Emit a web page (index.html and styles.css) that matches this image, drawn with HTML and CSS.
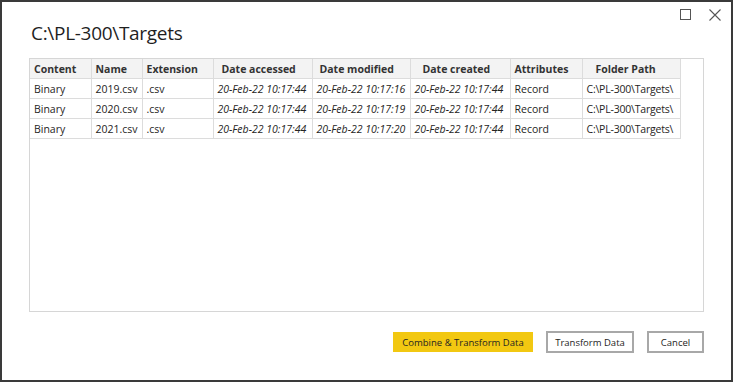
FILE: index.html
```html
<!DOCTYPE html>
<html lang="en">
<head>
    <meta charset="UTF-8">
    <title>C:\PL-300\Targets</title>
    <link rel="stylesheet" href="styles.css">
</head>
<body>
    <div class="dialog">
        <div class="window-controls">
            <span class="ctrl">
                <svg width="12" height="12" viewBox="0 0 12 12"><rect x="0.5" y="0.5" width="10" height="10" fill="none" stroke="#555" stroke-width="1"/></svg>
            </span>
            <span class="ctrl">
                <svg width="12" height="12" viewBox="0 0 12 12"><path d="M0.5 0.5 L11.5 11.5 M11.5 0.5 L0.5 11.5" stroke="#555" stroke-width="1.1" fill="none"/></svg>
            </span>
        </div>
        <h1 class="title">C:\PL-300\Targets</h1>
        <div class="preview">
            <table class="grid">
                <colgroup>
                    <col class="w-content">
                    <col class="w-name">
                    <col class="w-ext">
                    <col class="w-acc">
                    <col class="w-mod">
                    <col class="w-cre">
                    <col class="w-attr">
                    <col class="w-path">
                </colgroup>
                <thead>
                    <tr>
                        <th>Content</th>
                        <th>Name</th>
                        <th>Extension</th>
                        <th class="h-acc">Date accessed</th>
                        <th class="h-mod">Date modified</th>
                        <th class="h-cre">Date created</th>
                        <th>Attributes</th>
                        <th class="h-path">Folder Path</th>
                    </tr>
                </thead>
                <tbody>
                    <tr>
                        <td>Binary</td><td>2019.csv</td><td>.csv</td>
                        <td class="date">20-Feb-22 10:17:44</td>
                        <td class="date">20-Feb-22 10:17:16</td>
                        <td class="date">20-Feb-22 10:17:44</td>
                        <td>Record</td><td class="path">C:\PL-300\Targets\</td>
                    </tr>
                    <tr>
                        <td>Binary</td><td>2020.csv</td><td>.csv</td>
                        <td class="date">20-Feb-22 10:17:44</td>
                        <td class="date">20-Feb-22 10:17:19</td>
                        <td class="date">20-Feb-22 10:17:44</td>
                        <td>Record</td><td class="path">C:\PL-300\Targets\</td>
                    </tr>
                    <tr>
                        <td>Binary</td><td>2021.csv</td><td>.csv</td>
                        <td class="date">20-Feb-22 10:17:44</td>
                        <td class="date">20-Feb-22 10:17:20</td>
                        <td class="date">20-Feb-22 10:17:44</td>
                        <td>Record</td><td class="path">C:\PL-300\Targets\</td>
                    </tr>
                </tbody>
            </table>
        </div>
        <div class="actions">
            <button class="btn btn-primary">Combine &amp; Transform Data</button>
            <button class="btn btn-transform">Transform Data</button>
            <button class="btn btn-cancel">Cancel</button>
        </div>
    </div>
</body>
</html>
```

FILE: styles.css
```css
html, body {
    margin: 0;
    height: 100%;
}
body {
    font-family: "Open Sans", "Noto Sans", sans-serif;
    background-color: #fff;
    color: #252423;
}
.dialog {
    position: relative;
    box-sizing: border-box;
    width: 733px;
    height: 382px;
    border: 2px solid #3a3a3a;
    padding: 0 27px;
    background: #fff;
}
.window-controls {
    position: absolute;
    top: 7px;
    right: 10px;
    display: flex;
    gap: 17px;
}
.ctrl {
    display: block;
    width: 12px;
    height: 12px;
}
.ctrl svg {
    display: block;
}
.title {
    margin: 0;
    padding-top: 18px;
    padding-left: 2px;
    height: 38px;
    font-size: 19px;
    font-weight: 400;
    line-height: 26px;
    letter-spacing: -0.3px;
    color: #1f1f1f;
}
.preview {
    box-sizing: border-box;
    height: 254px;
    border: 1px solid #d6d6d6;
}
.grid {
    width: 650px;
    border-collapse: collapse;
    table-layout: fixed;
    font-size: 10.5px;
}
.w-content { width: 61px; }
.w-name { width: 51px; }
.w-ext { width: 71px; }
.w-acc { width: 99px; }
.w-mod { width: 98px; }
.w-cre { width: 100px; }
.w-attr { width: 72px; }
.w-path { width: 98px; }
.grid th,
.grid td {
    height: 19px;
    padding: 0 0 0 4px;
    border: 1px solid #dcdcdc;
    text-align: left;
    white-space: nowrap;
    overflow: hidden;
}
.grid tr:first-child th {
    border-top: none;
}
.grid th:first-child,
.grid td:first-child {
    border-left: none;
}
.grid th {
    background: #f3f3f3;
    font-weight: 700;
    color: #333;
}
.grid th.h-acc { padding-left: 8px; }
.grid th.h-mod { padding-left: 7px; }
.grid th.h-cre { padding-left: 12px; }
.grid th.h-path { padding-left: 13px; }
.grid td.date {
    font-style: italic;
}
.grid td.path {
    letter-spacing: -0.2px;
}
.actions {
    display: flex;
    justify-content: flex-end;
    align-items: center;
    gap: 13px;
    margin-top: 19px;
}
.btn {
    box-sizing: border-box;
    font-family: "Open Sans", "Noto Sans", sans-serif;
    font-size: 9.5px;
    color: #252423;
    background: #fff;
    border: 2px solid #a8a8a8;
    height: 22px;
    padding: 0;
    border-radius: 0;
}
.btn-primary {
    width: 140px;
    height: 20px;
    background: #f2c811;
    border-color: #f2c811;
}
.btn-transform {
    width: 88px;
}
.btn-cancel {
    width: 57px;
}
```
